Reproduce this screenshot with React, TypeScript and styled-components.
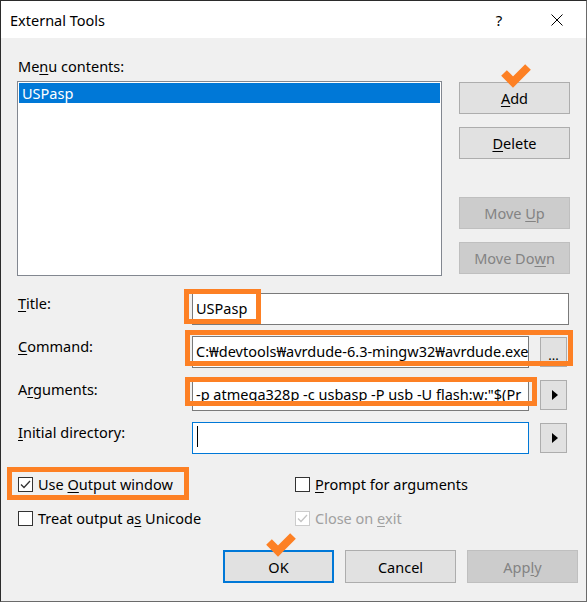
import React from "react";
import styled, { createGlobalStyle } from "styled-components";

const GlobalStyle = createGlobalStyle`
  html, body {
    margin: 0;
    padding: 0;
    background: #ffffff;
  }
  body {
    font-family: "Noto Sans", "Noto Sans CJK KR", sans-serif;
    font-size: 14.5px;
    color: #000;
  }
`;

const ORANGE = "#fd8024";

const Window = styled.div`
  width: 587px;
  height: 602px;
  box-sizing: border-box;
  border: 1px solid #6a6a6a;
  border-top-color: #2b2b2b;
  border-left-color: #2b2b2b;
  background: #f0f0f0;
  display: flex;
  flex-direction: column;
`;

const TitleBar = styled.div`
  height: 37px;
  background: #ffffff;
  display: flex;
  align-items: center;
  padding-left: 9px;
`;

const TitleText = styled.div`
  flex: 1;
  font-size: 14.5px;
`;

const TitleButton = styled.div`
  width: 58px;
  height: 37px;
  display: flex;
  align-items: center;
  justify-content: center;
  font-size: 15px;
`;

const Body = styled.div`
  flex: 1;
  padding: 18px 16px 0 16px;
`;

const TopSection = styled.div`
  display: grid;
  grid-template-columns: 425px 111px;
  column-gap: 17px;
`;

const ListColumn = styled.div`
  display: flex;
  flex-direction: column;
`;

const Label = styled.div`
  line-height: 20px;
  height: 20px;
  padding-left: 1px;
  white-space: nowrap;
`;

const ListLabel = styled(Label)`
  margin-bottom: 5px;
`;

const ListBox = styled.div`
  height: 195px;
  box-sizing: border-box;
  border: 1px solid #828790;
  background: #ffffff;
  padding: 1px;
`;

const ListItem = styled.div<{ $selected?: boolean }>`
  height: 20px;
  line-height: 20px;
  padding-left: 3px;
  background: ${p => (p.$selected ? "#0078d7" : "transparent")};
  color: ${p => (p.$selected ? "#ffffff" : "#000000")};
`;

const ButtonColumn = styled.div`
  display: flex;
  flex-direction: column;
  gap: 13px;
  padding-top: 26px;
`;

const Button = styled.div<{ $disabled?: boolean; $default?: boolean; $push?: number; $h?: number }>`
  position: relative;
  width: 111px;
  height: ${p => p.$h ?? 32}px;
  margin-top: ${p => p.$push ?? 0}px;
  box-sizing: border-box;
  border: ${p => (p.$default ? "2px solid #0078d7" : p.$disabled ? "1px solid #bfbfbf" : "1px solid #adadad")};
  background: ${p => (p.$disabled ? "#cccccc" : "#e1e1e1")};
  color: ${p => (p.$disabled ? "#838383" : "#000000")};
  display: flex;
  align-items: center;
  justify-content: center;
  line-height: 20px;
`;

const Acc = styled.span`
  text-decoration: underline;
  text-underline-offset: 2px;
  text-decoration-thickness: 1px;
`;

const FormGrid = styled.div`
  display: grid;
  grid-template-columns: 164px 337px 29px;
  column-gap: 11px;
  row-gap: 11px;
  margin-top: 17px;
`;

const FieldCell = styled.div<{ $wide?: boolean }>`
  position: relative;
  grid-column: ${p => (p.$wide ? "2 / 4" : "auto")};
`;

const Field = styled.div<{ $focused?: boolean }>`
  height: 32px;
  box-sizing: border-box;
  border: 1px solid ${p => (p.$focused ? "#0078d7" : "#7a7a7a")};
  background: #ffffff;
  padding: 4px 3px 0 3px;
  line-height: 20px;
  white-space: nowrap;
  overflow: hidden;
`;

const Caret = styled.span`
  display: inline-block;
  width: 1px;
  height: 21px;
  background: #000;
  vertical-align: top;
  margin-left: 1px;
  margin-top: -1px;
`;

const SideButton = styled.div`
  width: 27px;
  height: 30px;
  align-self: center;
  justify-self: start;
  box-sizing: border-box;
  border: 1px solid #adadad;
  background: #e1e1e1;
  display: flex;
  align-items: center;
  justify-content: center;
  line-height: 20px;
`;

const Dots = styled.span`
  padding-top: 6px;
  font-size: 13px;
`;

const Arrow = styled.span`
  width: 0;
  height: 0;
  border-left: 6px solid #000;
  border-top: 5px solid transparent;
  border-bottom: 5px solid transparent;
  margin-left: 2px;
`;

const Annot = styled.div<{ $l: number; $t: number; $w: number; $h: number }>`
  position: absolute;
  left: ${p => p.$l}px;
  top: ${p => p.$t}px;
  width: ${p => p.$w}px;
  height: ${p => p.$h}px;
  box-sizing: border-box;
  border: 5px solid ${ORANGE};
  pointer-events: none;
`;

const CheckGrid = styled.div`
  display: grid;
  grid-template-columns: 277px auto;
  row-gap: 14px;
  margin-top: 20px;
  padding-left: 1px;
`;

const CheckRow = styled.div<{ $disabled?: boolean }>`
  position: relative;
  display: flex;
  align-items: center;
  gap: 5px;
  height: 20px;
  line-height: 20px;
  color: ${p => (p.$disabled ? "#a0a0a0" : "#000000")};
  white-space: nowrap;
`;

const Box = styled.div<{ $disabled?: boolean }>`
  width: 15px;
  height: 15px;
  box-sizing: border-box;
  border: 1px solid ${p => (p.$disabled ? "#cccccc" : "#333333")};
  background: #ffffff;
  display: flex;
`;

const ButtonRow = styled.div`
  display: flex;
  justify-content: flex-end;
  gap: 11px;
  margin-top: 22px;
  margin-right: -8px;
`;

const Tick = styled.svg`
  position: absolute;
  left: 41px;
  top: -20px;
  overflow: visible;
`;

function OrangeTick() {
  return (
    <Tick width="30" height="26" viewBox="0 0 30 26">
      <polyline points="3,10 12,19 27,4" fill="none" stroke={ORANGE} strokeWidth="8" strokeLinejoin="miter" />
    </Tick>
  );
}

function CheckBox({ checked, disabled }: { checked?: boolean; disabled?: boolean }) {
  return (
    <Box $disabled={disabled}>
      {checked && (
        <svg width="13" height="13" viewBox="0 0 13 13">
          <polyline
            points="2,6.5 5,9.5 11,3"
            fill="none"
            stroke={disabled ? "#c4c4c4" : "#333333"}
            strokeWidth="1.3"
          />
        </svg>
      )}
    </Box>
  );
}

export default function App() {
  return (
    <>
      <GlobalStyle />
      <Window>
        <TitleBar>
          <TitleText>External Tools</TitleText>
          <TitleButton>?</TitleButton>
          <TitleButton>
            <svg width="12" height="12" viewBox="0 0 12 12">
              <path d="M0.5 0.5 L11.5 11.5 M11.5 0.5 L0.5 11.5" stroke="#000" strokeWidth="1" />
            </svg>
          </TitleButton>
        </TitleBar>
        <Body>
          <TopSection>
            <ListColumn>
              <ListLabel>
                Me<Acc>n</Acc>u contents:
              </ListLabel>
              <ListBox>
                <ListItem $selected>USPasp</ListItem>
              </ListBox>
            </ListColumn>
            <ButtonColumn>
              <Button>
                <Acc>A</Acc>dd
                <OrangeTick />
              </Button>
              <Button>
                <Acc>D</Acc>elete
              </Button>
              <Button $disabled $push={25}>
                Move&nbsp;<Acc>U</Acc>p
              </Button>
              <Button $disabled>
                Move Do<Acc>w</Acc>n
              </Button>
            </ButtonColumn>
          </TopSection>

          <FormGrid>
            <Label>
              <Acc>T</Acc>itle:
            </Label>
            <FieldCell $wide>
              <Field>USPasp</Field>
              <Annot $l={-8} $t={-4} $w={77} $h={35} />
            </FieldCell>

            <Label>
              <Acc>C</Acc>ommand:
            </Label>
            <FieldCell>
              <Field>C:₩devtools₩avrdude-6.3-mingw32₩avrdude.exe</Field>
              <Annot $l={-7} $t={-6} $w={388} $h={36} />
            </FieldCell>
            <SideButton>
              <Dots>...</Dots>
            </SideButton>

            <Label>
              A<Acc>r</Acc>guments:
            </Label>
            <FieldCell>
              <Field>-p atmega328p -c usbasp -P usb -U flash:w:"$(Pr</Field>
              <Annot $l={-7} $t={-2} $w={352} $h={29} />
            </FieldCell>
            <SideButton>
              <Arrow />
            </SideButton>

            <Label>
              <Acc>I</Acc>nitial directory:
            </Label>
            <FieldCell>
              <Field $focused>
                <Caret />
              </Field>
            </FieldCell>
            <SideButton>
              <Arrow />
            </SideButton>
          </FormGrid>

          <CheckGrid>
            <CheckRow>
              <CheckBox checked />
              <span>
                Use <Acc>O</Acc>utput window
              </span>
              <Annot $l={-11} $t={-7} $w={182} $h={33} />
            </CheckRow>
            <CheckRow>
              <CheckBox />
              <span>
                <Acc>P</Acc>rompt for arguments
              </span>
            </CheckRow>
            <CheckRow>
              <CheckBox />
              <span>
                Treat output a<Acc>s</Acc> Unicode
              </span>
            </CheckRow>
            <CheckRow $disabled>
              <CheckBox checked disabled />
              <span>
                Close on <Acc>e</Acc>xit
              </span>
            </CheckRow>
          </CheckGrid>

          <ButtonRow>
            <Button $default $h={33}>
              OK
              <OrangeTick />
            </Button>
            <Button $h={33}>Cancel</Button>
            <Button $disabled $h={33}>
              App<Acc>l</Acc>y
            </Button>
          </ButtonRow>
        </Body>
      </Window>
    </>
  );
}
